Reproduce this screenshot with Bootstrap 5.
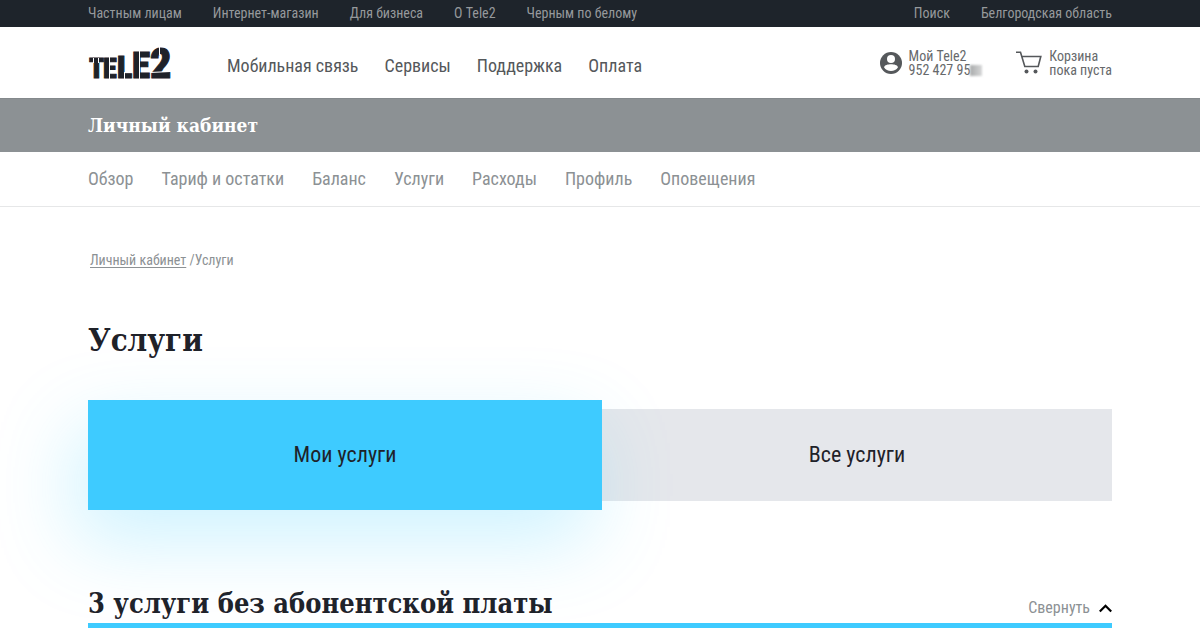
<!DOCTYPE html>
<html lang="ru">
<head>
<meta charset="utf-8">
<meta name="viewport" content="width=device-width, initial-scale=1">
<title>Услуги — Tele2</title>
<link href="https://cdn.jsdelivr.net/npm/bootstrap@5.3.0/dist/css/bootstrap.min.css" rel="stylesheet">
<style>
  :root { --ink: #1f2229; --sky: #3ecbff; --muted: #8c9194; }
  body { font-family: "Roboto Condensed", "Liberation Sans", sans-serif; font-size: 18px; line-height: 24px; color: var(--ink); background: #fff; }
  a { text-decoration: none; color: inherit; }
  .page-width { max-width: 1024px; margin-left: auto; margin-right: auto; }
  .slab { font-family: "DejaVu Serif Condensed", "DejaVu Serif", serif; font-weight: 700; margin: 0; }
  .topline { background: #1e242b; color: #96999c; font-size: 14px; line-height: 26px; padding-bottom: 1px; }
  .topline .links { column-gap: 31px; }
  .site-header { min-height: 71px; color: #55585b; }
  .main-menu { column-gap: 26px; font-size: 18px; padding-top: 6px; }
  .brand { margin-right: 55px; }
  .contacts { column-gap: 34px; }
  .contacts a { font-size: 14px; line-height: 14px; column-gap: 7px; color: #66696b; }
  .smudge { display: inline-block; width: 12px; height: 11px; vertical-align: -1px; background: linear-gradient(90deg, #a9abac, #d6d7d7); filter: blur(1px); }
  .cabinet { background: #8c9194; color: #fff; border-top: 1px solid #84898c; }
  .cabinet .slab { font-size: 19px; line-height: 53px; }
  .sub-menu { border-bottom: 1px solid #e6e7e8; color: var(--muted); }
  .sub-menu .links { column-gap: 28px; row-gap: 8px; padding: 15px 0; }
  .crumbs { font-size: 14px; line-height: 20px; color: var(--muted); padding: 43px 2px 0; }
  .crumbs a { text-decoration: underline; text-underline-offset: 2px; }
  h1.slab { font-size: 31px; line-height: 44px; padding-top: 48px; }
  .switcher { padding-top: 38px; }
  .switcher button { border: 0; font-size: 22px; color: var(--ink); padding: 0; }
  .tab-on { background: var(--sky); height: 110px; flex: 0 0 auto; width: calc(50% + 2px); box-shadow: -12px 30px 80px rgba(62, 203, 255, .26); z-index: 1; }
  .tab-off { background: #e5e7eb; height: 92px; }
  .group-head { padding-top: 75px; }
  h2.slab { font-size: 27px; line-height: 38px; }
  .fold { border: 0; background: none; padding: 0; color: var(--muted); font-size: 16px; line-height: 30px; column-gap: 9px; }
  .group-rule { border-top: 5px solid var(--sky); }
</style>
</head>
<body>
<div class="topline">
  <div class="page-width d-flex flex-wrap justify-content-between">
    <nav class="links d-flex flex-wrap" aria-label="Разделы">
      <a href="#">Частным лицам</a><a href="#">Интернет-магазин</a><a href="#">Для бизнеса</a><a href="#">О Tele2</a><a href="#">Черным по белому</a>
    </nav>
    <div class="links d-flex">
      <a href="#">Поиск</a><a href="#">Белгородская область</a>
    </div>
  </div>
</div>

<header class="site-header page-width d-flex flex-wrap align-items-center">
  <a class="brand" href="#" aria-label="Tele2">
    <svg class="d-block" width="84" height="58" viewBox="0 0 84 58" font-family="Roboto Condensed, Liberation Sans, sans-serif" font-weight="900" fill="#1f2229" stroke="#1f2229">
      <text y="44"><tspan x="1" font-size="27">T</tspan><tspan x="15" font-size="28">E</tspan><tspan x="29" font-size="32">L</tspan><tspan x="44" font-size="37">E</tspan><tspan x="62" font-size="42">2</tspan></text>
      <g fill="#fff" stroke="none">
        <rect x="5" y="24" width="1" height="5"/><rect x="10" y="24" width="1" height="5"/>
        <rect x="21" y="22" width="1" height="24"/><rect x="36" y="38" width="1" height="8"/>
        <rect x="51" y="16" width="1" height="30"/>
        <rect x="71" y="12" width="1" height="9"/><path d="m62 38 21-1v1l-21 1z"/>
      </g>
    </svg>
  </a>
  <nav class="main-menu d-flex flex-wrap" aria-label="Главное меню">
    <a href="#">Мобильная связь</a><a href="#">Сервисы</a><a href="#">Поддержка</a><a href="#">Оплата</a>
  </nav>
  <div class="contacts d-flex ms-auto align-items-center">
    <a class="d-flex align-items-center" href="#">
      <svg width="22" height="22" viewBox="0 0 22 22"><circle cx="11" cy="11" r="11" fill="#55585b"/><circle cx="11" cy="7" r="4" fill="#fff"/><path d="M4 15.200C4.600 12.900 8 12.200 11 12.200s6.400.7 7 3C16.500 17.700 14 19 11 19s-5.500-1.300-7-3.800z" fill="#fff"/></svg>
      <span>Мой Tele2<br>952 427 95<span class="smudge"></span></span>
    </a>
    <a class="d-flex align-items-center" href="#">
      <svg width="26" height="23" viewBox="0 0 26 23" fill="none" stroke="#55585b" stroke-width="1.600"><path d="M0 1.200h4.500l4.300 14.300h13.400l2.600-10H6"/><circle cx="10.500" cy="20.500" r="2" fill="#55585b" stroke="none"/><circle cx="19.500" cy="20.500" r="2" fill="#55585b" stroke="none"/></svg>
      <span>Корзина<br>пока пуста</span>
    </a>
  </div>
</header>

<div class="cabinet"><div class="page-width"><p class="slab">Личный кабинет</p></div></div>

<nav class="sub-menu" aria-label="Личный кабинет">
  <div class="links page-width d-flex flex-wrap">
    <a href="#">Обзор</a><a href="#">Тариф и остатки</a><a href="#">Баланс</a><a href="#">Услуги</a><a href="#">Расходы</a><a href="#">Профиль</a><a href="#">Оповещения</a>
  </div>
</nav>

<main class="page-width">
  <div class="crumbs"><a href="#">Личный кабинет</a> /Услуги</div>
  <h1 class="slab">Услуги</h1>
  <div class="switcher d-flex align-items-center">
    <button type="button" class="tab-on position-relative">Мои услуги</button>
    <button type="button" class="tab-off w-50">Все услуги</button>
  </div>
  <section>
    <div class="group-head d-flex align-items-end justify-content-between">
      <h2 class="slab">3 услуги без абонентской платы</h2>
      <button type="button" class="fold d-flex align-items-center">Свернуть
        <svg width="13" height="9" viewBox="0 0 13 9" fill="none" stroke="#000" stroke-width="2.200"><path d="M.8 7.600 6.500 1.800l5.700 5.800"/></svg>
      </button>
    </div>
    <div class="group-rule"></div>
  </section>
</main>
<script src="https://cdn.jsdelivr.net/npm/bootstrap@5.3.0/dist/js/bootstrap.bundle.min.js"></script>
</body>
</html>
